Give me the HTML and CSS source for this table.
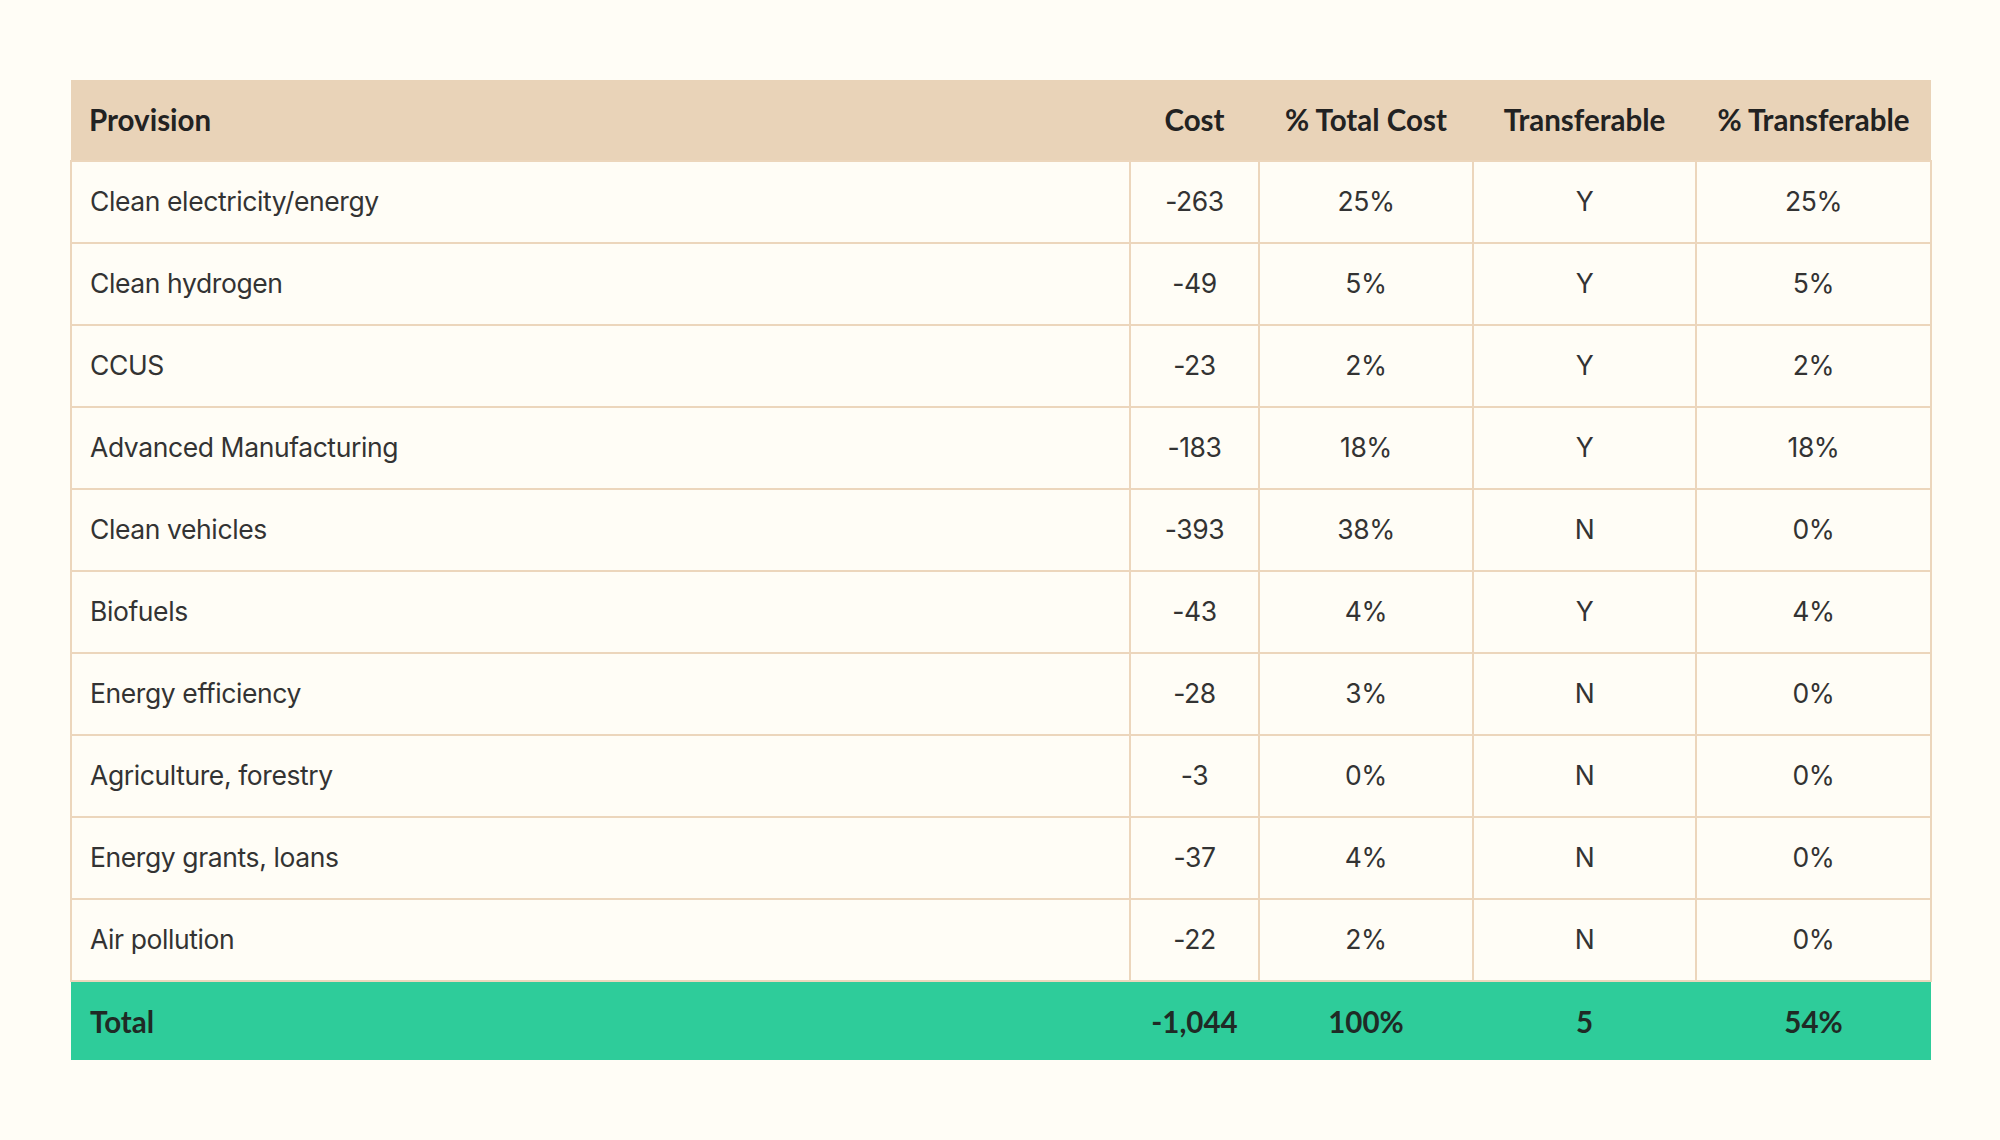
FILE: index.html
```html
<!DOCTYPE html>
<html lang="en">
<head>
<meta charset="utf-8">
<title>Provisions</title>
<link rel="stylesheet" href="styles.css">
</head>
<body>
<div class="page">
<table class="grid">
  <colgroup>
    <col class="c-prov"><col class="c-cost"><col class="c-pct"><col class="c-tr"><col class="c-ptr">
  </colgroup>
  <thead>
    <tr><th class="left">Provision</th><th>Cost</th><th>% Total Cost</th><th>Transferable</th><th>% Transferable</th></tr>
  </thead>
  <tbody>
    <tr><td class="left">Clean electricity/energy</td><td>-263</td><td>25%</td><td>Y</td><td>25%</td></tr>
    <tr><td class="left">Clean hydrogen</td><td>-49</td><td>5%</td><td>Y</td><td>5%</td></tr>
    <tr><td class="left">CCUS</td><td>-23</td><td>2%</td><td>Y</td><td>2%</td></tr>
    <tr><td class="left">Advanced Manufacturing</td><td>-183</td><td>18%</td><td>Y</td><td>18%</td></tr>
    <tr><td class="left">Clean vehicles</td><td>-393</td><td>38%</td><td>N</td><td>0%</td></tr>
    <tr><td class="left">Biofuels</td><td>-43</td><td>4%</td><td>Y</td><td>4%</td></tr>
    <tr><td class="left">Energy efficiency</td><td>-28</td><td>3%</td><td>N</td><td>0%</td></tr>
    <tr><td class="left">Agriculture, forestry</td><td>-3</td><td>0%</td><td>N</td><td>0%</td></tr>
    <tr><td class="left">Energy grants, loans</td><td>-37</td><td>4%</td><td>N</td><td>0%</td></tr>
    <tr><td class="left">Air pollution</td><td>-22</td><td>2%</td><td>N</td><td>0%</td></tr>
  </tbody>
  <tfoot>
    <tr><td class="left">Total</td><td>-1,044</td><td>100%</td><td>5</td><td>54%</td></tr>
  </tfoot>
</table>
</div>
</body>
</html>
```

FILE: styles.css
```css
html, body {
  margin: 0;
  padding: 0;
  background: #fffdf6;
}
.page {
  padding: 80px 70px 0 70px;
}
.grid {
  width: 1860px;
  border-collapse: collapse;
  table-layout: fixed;
  font-family: Inter, "Liberation Sans", sans-serif;
  color: #2a2a2a;
}
.c-prov { width: 1059px; }
.c-cost { width: 129px; }
.c-pct { width: 214px; }
.c-tr { width: 223px; }
.c-ptr { width: 235px; }

.grid th {
  background: #e9d3b8;
  height: 78px;
  padding: 0 0 2px 0;
  font-family: Lato, "Liberation Sans", sans-serif;
  font-weight: 700;
  font-size: 29.5px;
  color: #222222;
  text-align: center;
  border: none;
}
.grid tbody td {
  height: 77px;
  padding: 0 0 3px 0;
  font-size: 26.5px;
  font-weight: 400;
  text-align: center;
  border: 2px solid #ecd6bc;
  letter-spacing: -0.4px;
  color: #333333;
}
.grid .left {
  text-align: left;
  padding-left: 18px;
}
.grid tfoot td {
  background: #2ecc9a;
  height: 78px;
  padding: 0;
  font-family: Lato, "Liberation Sans", sans-serif;
  font-weight: 700;
  font-size: 29.5px;
  color: #1f2a25;
  text-align: center;
  border: none;
}
.grid tfoot td.left {
  text-align: left;
  padding-left: 19px;
}
```
